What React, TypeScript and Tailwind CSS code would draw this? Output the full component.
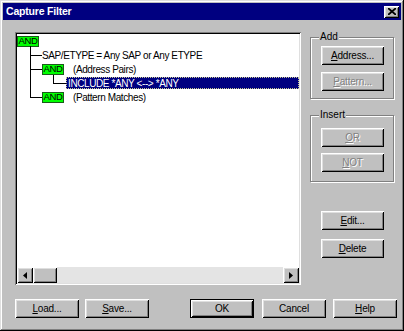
import React from 'react';

const raised =
    'shadow-[inset_1px_1px_0_#fff,inset_-1px_-1px_0_#000,inset_2px_2px_0_#dfdfdf,inset_-2px_-2px_0_#808080]';

interface BtnProps {
    label: string;
    hot?: number;
    disabled?: boolean;
    isDefault?: boolean;
    w?: string;
}

const Btn: React.FC<BtnProps> = ({ label, hot, disabled, isDefault, w = 'w-[64px]' }) => {
    const parts =
        hot === undefined
            ? [label]
            : [label.slice(0, hot), label.slice(hot, hot + 1), label.slice(hot + 1)];
    return (
        <div
            className={`${w} h-[19px] bg-[#c0c0c0] flex items-center justify-center ${
                isDefault ? 'border border-black' : ''
            } ${raised}`}
        >
            <span
                className={`text-[10px] leading-none tracking-[-0.2px] ${
                    disabled ? 'text-[#808080] [text-shadow:1px_1px_0_#fff]' : 'text-black'
                }`}
            >
                {hot === undefined ? (
                    parts[0]
                ) : (
                    <>
                        {parts[0]}
                        <u className="underline-offset-1">{parts[1]}</u>
                        {parts[2]}
                    </>
                )}
            </span>
        </div>
    );
};

const Group: React.FC<{ title: string; className?: string; children: React.ReactNode }> = ({
    title,
    className = '',
    children,
}) => (
    <div
        className={`relative border border-[#808080] shadow-[1px_1px_0_#fff,inset_1px_1px_0_#fff] ${className}`}
    >
        <span className="absolute -top-[7px] left-[8px] bg-[#c0c0c0] px-[1px] text-[10px] leading-[12px]">
            {title}
        </span>
        {children}
    </div>
);

const AndTag: React.FC = () => (
    <span className="w-[22px] h-[11px] bg-[#00ff00] border border-[#1a5a1a] flex items-center justify-center text-[9.5px] tracking-[-0.3px] leading-none text-black">
        AND
    </span>
);

const Arrow: React.FC<{ dir: 'left' | 'right' }> = ({ dir }) => (
    <div className={`w-[16px] h-[16px] bg-[#c0c0c0] flex items-center justify-center ${raised}`}>
        <svg width="4" height="7" viewBox="0 0 4 7">
            {dir === 'left' ? (
                <path d="M4 0 L0 3.5 L4 7 Z" fill="#000" />
            ) : (
                <path d="M0 0 L4 3.5 L0 7 Z" fill="#000" />
            )}
        </svg>
    </div>
);

export default function App() {
    return (
        <div
            className="w-[404px] h-[331px] bg-[#c0c0c0] p-[3px] flex flex-col shadow-[inset_-1px_-1px_0_#000,inset_1px_1px_0_#dfdfdf,inset_-2px_-2px_0_#808080,inset_2px_2px_0_#fff] text-black"
            style={{ fontFamily: '"Liberation Sans", Arial, sans-serif' }}
        >
            {/* title bar */}
            <div className="h-[17px] bg-[#000080] flex items-center justify-between pl-[3px] pr-[2px]">
                <span className="text-white font-bold text-[10.5px] tracking-[-0.2px] leading-none">Capture Filter</span>
                <div className={`w-[15px] h-[12px] bg-[#c0c0c0] flex items-center justify-center ${raised}`}>
                    <svg width="8" height="7" viewBox="0 0 8 7">
                        <path d="M0 0 L8 7 M8 0 L0 7" stroke="#000" strokeWidth="1.8" />
                    </svg>
                </div>
            </div>

            <div className="flex mt-[12px]">
                {/* filter tree */}
                <div className="ml-[12px] w-[286px] h-[253px] p-[2px] bg-white shadow-[inset_1px_1px_0_#808080,inset_-1px_-1px_0_#fff,inset_2px_2px_0_#000,inset_-2px_-2px_0_#dfdfdf] flex flex-col">
                    <div className="relative flex-1 text-[10px] tracking-[-0.4px]">
                        <svg className="absolute inset-0 pointer-events-none" width="282" height="233">
                            <g fill="#000">
                                <rect x="13" y="12" width="1" height="52" />
                                <rect x="13" y="21" width="12" height="1" />
                                <rect x="13" y="35" width="12" height="1" />
                                <rect x="13" y="63" width="12" height="1" />
                                <rect x="36" y="41" width="1" height="9" />
                                <rect x="36" y="49" width="13" height="1" />
                            </g>
                        </svg>
                        <div className="h-[14px] flex items-center">
                            <AndTag />
                        </div>
                        <div className="h-[14px] flex items-center pl-[25px]">SAP/ETYPE = Any SAP or Any ETYPE</div>
                        <div className="h-[14px] flex items-center pl-[25px]">
                            <AndTag />
                            <span className="ml-[9px]">(Address Pairs)</span>
                        </div>
                        <div className="h-[14px] flex items-center pl-[49px]">
                            <div className="flex-1 h-[12px] bg-[#000080] text-white flex items-center pl-[1px] border border-dotted border-[#c8c890]">
                                INCLUDE *ANY &lt;--&gt; *ANY
                            </div>
                        </div>
                        <div className="h-[14px] flex items-center pl-[25px]">
                            <AndTag />
                            <span className="ml-[9px]">(Pattern Matches)</span>
                        </div>
                    </div>
                    {/* horizontal scrollbar */}
                    <div className="h-[16px] flex bg-[#e4e4e4]">
                        <Arrow dir="left" />
                        <div className={`w-[24px] h-[16px] bg-[#c0c0c0] ${raised}`} />
                        <div className="flex-1" />
                        <Arrow dir="right" />
                    </div>
                </div>

                {/* right column */}
                <div className="ml-[9px] w-[84px] mt-[5px] flex flex-col">
                    <Group title="Add" className="pt-[8px] pb-[7px] pl-[10px]">
                        <Btn label="Address..." hot={0} w="w-[63px]" />
                        <div className="mt-[7px]">
                            <Btn label="Pattern..." hot={0} disabled w="w-[63px]" />
                        </div>
                    </Group>
                    <Group title="Insert" className="mt-[16px] pt-[12px] pb-[9px] pl-[10px]">
                        <Btn label="OR" hot={0} disabled w="w-[63px]" />
                        <div className="mt-[6px]">
                            <Btn label="NOT" hot={0} disabled w="w-[63px]" />
                        </div>
                    </Group>
                    <div className="mt-[29px] pl-[11px] flex flex-col gap-[9px]">
                        <Btn label="Edit..." hot={0} w="w-[63px]" />
                        <Btn label="Delete" hot={0} w="w-[63px]" />
                    </div>
                </div>
            </div>

            {/* bottom buttons */}
            <div className="flex mt-[14px] ml-[12px]">
                <Btn label="Load..." hot={0} />
                <div className="ml-[6px]">
                    <Btn label="Save..." hot={0} />
                </div>
                <div className="ml-[41px]">
                    <Btn label="OK" isDefault />
                </div>
                <div className="ml-[8px]">
                    <Btn label="Cancel" />
                </div>
                <div className="ml-[7px]">
                    <Btn label="Help" hot={0} />
                </div>
            </div>
        </div>
    );
}
